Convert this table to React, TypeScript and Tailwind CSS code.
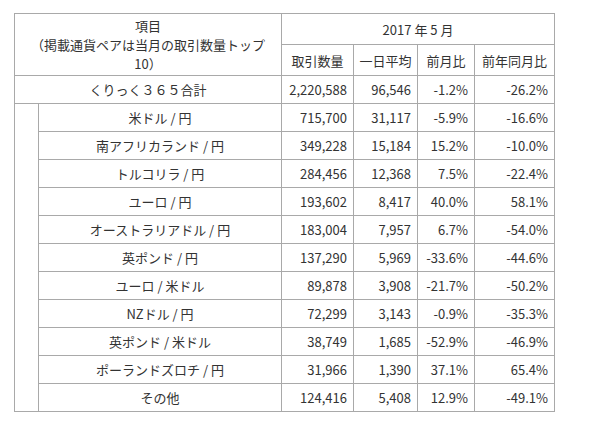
const rows = [
  ["米ドル / 円", "715,700", "31,117", "-5.9%", "-16.6%"],
  ["南アフリカランド / 円", "349,228", "15,184", "15.2%", "-10.0%"],
  ["トルコリラ / 円", "284,456", "12,368", "7.5%", "-22.4%"],
  ["ユーロ / 円", "193,602", "8,417", "40.0%", "58.1%"],
  ["オーストラリアドル / 円", "183,004", "7,957", "6.7%", "-54.0%"],
  ["英ポンド / 円", "137,290", "5,969", "-33.6%", "-44.6%"],
  ["ユーロ / 米ドル", "89,878", "3,908", "-21.7%", "-50.2%"],
  ["NZドル / 円", "72,299", "3,143", "-0.9%", "-35.3%"],
  ["英ポンド / 米ドル", "38,749", "1,685", "-52.9%", "-46.9%"],
  ["ポーランドズロチ / 円", "31,966", "1,390", "37.1%", "65.4%"],
  ["その他", "124,416", "5,408", "12.9%", "-49.1%"],
];

const cell = "border border-[#a9a9a9] px-[6px] py-0";
const head = "border border-[#a9a9a9] px-0 py-0 font-normal text-center whitespace-nowrap";

export default function App() {
  return (
    <div
      className="w-[600px] h-[439px] bg-white pt-[13px] pl-[14px] text-[13px] text-[#333]"
      style={{ fontFamily: '"Noto Sans CJK JP", "Noto Sans", sans-serif' }}
    >
      <table className="table-fixed border-collapse w-[540px] leading-[17px]">
        <colgroup>
          <col className="w-[24px]" />
          <col className="w-[243px]" />
          <col className="w-[72px]" />
          <col className="w-[64px]" />
          <col className="w-[57px]" />
          <col className="w-[80px]" />
        </colgroup>
        <thead>
          <tr className="h-[31px]">
            <th colSpan={2} rowSpan={2} className={`${head} leading-[19px]`}>
              <div>項目</div>
              <div>（掲載通貨ペアは当月の取引数量トップ</div>
              <div>10）</div>
            </th>
            <th colSpan={4} className={head}>
              2017 年 5 月
            </th>
          </tr>
          <tr className="h-[31px]">
            <th className={head}>取引数量</th>
            <th className={head}>一日平均</th>
            <th className={head}>前月比</th>
            <th className={head}>前年同月比</th>
          </tr>
        </thead>
        <tbody>
          <tr className="h-[28px]">
            <td colSpan={2} className={`${cell} text-center`}>
              くりっく３６５合計
            </td>
            <td className={`${cell} text-right`}>2,220,588</td>
            <td className={`${cell} text-right`}>96,546</td>
            <td className={`${cell} text-right`}>-1.2%</td>
            <td className={`${cell} text-right`}>-26.2%</td>
          </tr>
          {rows.map((r, i) => (
            <tr key={r[0]} className="h-[28px]">
              {i === 0 && <td rowSpan={rows.length} className={cell}></td>}
              <td className={`${cell} text-center`}>{r[0]}</td>
              <td className={`${cell} text-right`}>{r[1]}</td>
              <td className={`${cell} text-right`}>{r[2]}</td>
              <td className={`${cell} text-right`}>{r[3]}</td>
              <td className={`${cell} text-right`}>{r[4]}</td>
            </tr>
          ))}
        </tbody>
      </table>
    </div>
  );
}
